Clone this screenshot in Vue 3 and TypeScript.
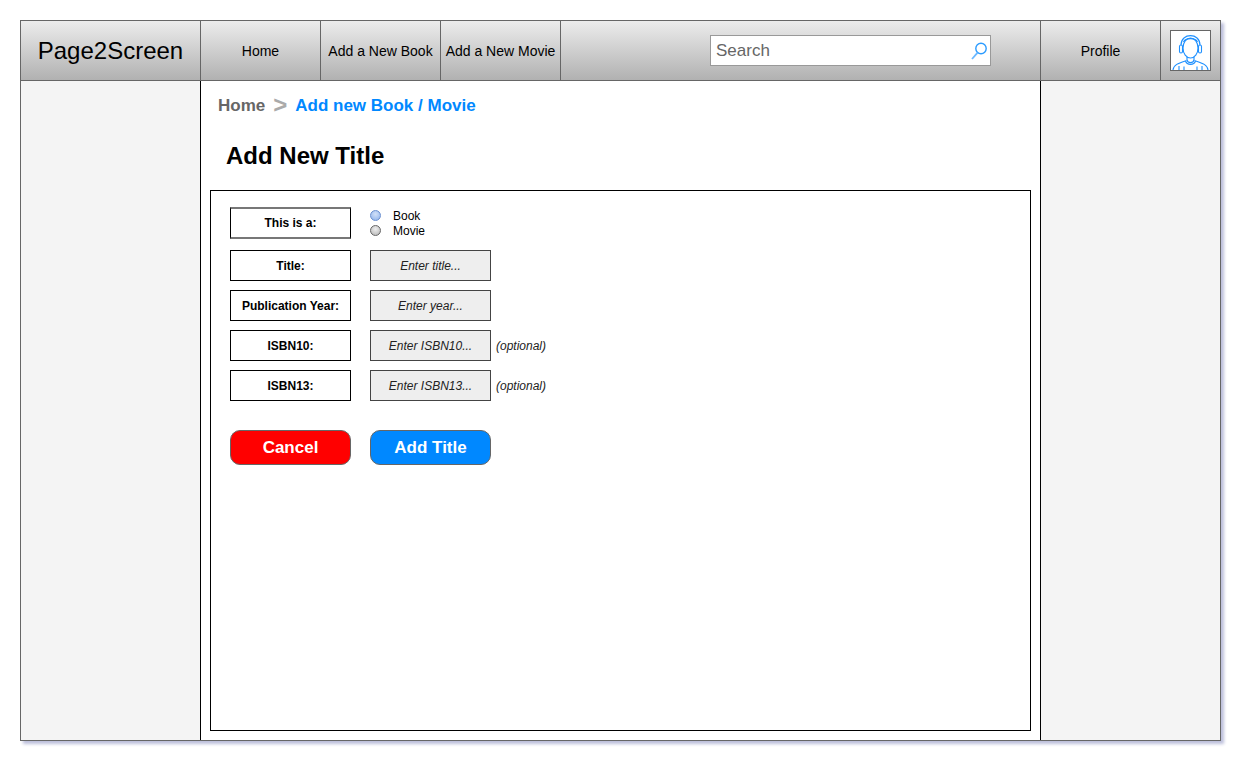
<script setup lang="ts">
interface Row { label: string; placeholder: string; optional: boolean }
const navItems: string[] = ['Home', 'Add a New Book', 'Add a New Movie']
const rows: Row[] = [
  { label: 'Title:', placeholder: 'Enter title...', optional: false },
  { label: 'Publication Year:', placeholder: 'Enter year...', optional: false },
  { label: 'ISBN10:', placeholder: 'Enter ISBN10...', optional: true },
  { label: 'ISBN13:', placeholder: 'Enter ISBN13...', optional: true },
]
</script>

<template>
  <div class="page">
    <div class="frame">
      <header class="top">
        <div class="brand">Page2Screen</div>
        <div v-for="item in navItems" :key="item" class="nav">{{ item }}</div>
        <div class="search-area">
          <div class="search">
            <span class="search-text">Search</span>
            <svg class="glass" width="18" height="20" viewBox="0 0 18 20" fill="none" stroke="#2b9bff">
              <circle cx="11" cy="7.5" r="5.2" stroke-width="1.4" />
              <path d="M7.6 11.6 L2 18" stroke-width="1.8" stroke="#6bb8ff" />
            </svg>
          </div>
        </div>
        <div class="profile">Profile</div>
        <div class="avatar-cell">
          <div class="avatar">
            <svg width="39" height="39" viewBox="0 0 39 39" fill="none" stroke="#1e90ff" stroke-width="1.1">
              <ellipse cx="19.5" cy="17" rx="7.5" ry="10" />
              <path d="M10 14 C10 1.5 29 1.5 29 14" />
              <path d="M12.5 11 C14.5 6.5 24.5 6.5 26.5 11" />
              <rect x="8.5" y="14" width="3" height="8" rx="1.5" />
              <rect x="27.5" y="14" width="3" height="8" rx="1.5" />
              <path d="M16 26 V29 M23 26 V29" />
              <path d="M16 29 C17 32.5 22 32.5 23 29" />
              <path d="M14.5 30 C16 34.5 23 34.5 24.5 30" />
              <path d="M2 39 C2.5 33.5 8 32 15.5 29.5 M37 39 C36.500 33.500 31 32 23.500 29.500" />
              <path d="M8 35 V39 M31 35 V39 M13 35.500 V39 M26 35.500 V39" />
            </svg>
          </div>
        </div>
      </header>

      <div class="body">
        <aside class="side"></aside>
        <main class="main">
          <nav class="crumbs">
            <span class="crumb-home">Home</span>
            <span class="crumb-sep">&gt;</span>
            <span class="crumb-current">Add new Book / Movie</span>
          </nav>
          <h1 class="title">Add New Title</h1>
          <section class="panel">
            <div class="type-row">
              <div class="label type-label">This is a:</div>
              <div class="radios">
                <div class="radio-line"><span class="dot dot-on"></span><span>Book</span></div>
                <div class="radio-line"><span class="dot dot-off"></span><span>Movie</span></div>
              </div>
            </div>
            <div v-for="row in rows" :key="row.label" class="row">
              <div class="label">{{ row.label }}</div>
              <div class="input">{{ row.placeholder }}</div>
              <span v-if="row.optional" class="optional">(optional)</span>
            </div>
            <div class="actions">
              <button class="btn cancel" type="button">Cancel</button>
              <button class="btn add" type="button">Add Title</button>
            </div>
          </section>
        </main>
        <aside class="side"></aside>
      </div>
    </div>
  </div>
</template>

<style>
html, body { margin: 0; background: #fff; }
</style>

<style scoped>
.page {
  width: 1247px;
  height: 767px;
  padding: 20px 0 0 20px;
  box-sizing: border-box;
  font-family: "Liberation Sans", Arial, sans-serif;
  color: #000;
  overflow: hidden;
}
.frame {
  width: 1201px;
  height: 721px;
  box-sizing: border-box;
  border: 1px solid #666;
  box-shadow: 3px 3px 3px #bcbfdb;
  display: flex;
  flex-direction: column;
  background: #f4f4f4;
}
.top {
  height: 60px;
  flex: none;
  display: flex;
  box-sizing: border-box;
  border-bottom: 1px solid #666;
  background: linear-gradient(#ececec, #b1b1b1);
}
.brand {
  width: 180px;
  box-sizing: border-box;
  flex: none;
  border-right: 1px solid #666;
  display: flex;
  align-items: center;
  justify-content: center;
  font-size: 24px;
}
.nav, .profile {
  width: 120px;
  flex: none;
  box-sizing: border-box;
  border-right: 1px solid #666;
  display: flex;
  align-items: center;
  justify-content: center;
  font-size: 14px;
  white-space: nowrap;
}
.search-area {
  width: 480px;
  flex: none;
  box-sizing: border-box;
  border-right: 1px solid #666;
  padding: 14px 0 0 149px;
}
.search {
  width: 281px;
  height: 31px;
  box-sizing: border-box;
  border: 1px solid #999;
  background: #fff;
  display: flex;
  align-items: center;
  justify-content: space-between;
  padding: 0 2px 0 5px;
}
.search-text {
  font-size: 17px;
  color: #666;
}
.glass { flex: none; }
.avatar-cell {
  flex: 1;
  padding: 9px 0 0 9px;
  box-sizing: border-box;
}
.avatar {
  width: 41px;
  height: 41px;
  box-sizing: border-box;
  border: 1px solid #666;
  background: #fff;
  overflow: hidden;
}
.avatar svg { display: block; }
.body {
  flex: 1;
  display: flex;
  min-height: 0;
}
.side { flex: 1; background: #f4f4f4; }
.main {
  width: 841px;
  flex: none;
  box-sizing: border-box;
  border-left: 1px solid #000;
  border-right: 1px solid #000;
  background: #fff;
  padding: 0 9px 9px;
  display: flex;
  flex-direction: column;
}
.crumbs {
  height: 49px;
  flex: none;
  display: flex;
  align-items: center;
  gap: 8px;
  padding-left: 8px;
  font-size: 17px;
  font-weight: bold;
}
.crumb-home { color: #666; }
.crumb-sep { color: #aaa; font-size: 24px; line-height: 1; margin-top: -1px; }
.crumb-current { color: #0088ff; }
.title {
  margin: 0;
  height: 60px;
  flex: none;
  padding-left: 16px;
  box-sizing: border-box;
  font-size: 24px;
  line-height: 52px;
  font-weight: bold;
}
.panel {
  flex: 1;
  box-sizing: border-box;
  border: 1px solid #000;
  background: #fff;
  padding: 16px 19px 0;
}
.type-row, .row {
  display: flex;
  align-items: center;
  gap: 19px;
}
.type-row { height: 32px; margin-bottom: 11px; }
.row { height: 31px; margin-bottom: 9px; }
.label {
  width: 121px;
  height: 31px;
  box-sizing: border-box;
  border: 1px solid #000;
  display: flex;
  align-items: center;
  justify-content: center;
  font-size: 12px;
  font-weight: bold;
  flex: none;
  white-space: nowrap;
}
.type-label {
  height: 32px;
  border-top: 2px solid #777;
  border-bottom: 2px solid #777;
}
.radios {
  display: flex;
  flex-direction: column;
  font-size: 12px;
}
.radio-line {
  display: flex;
  align-items: center;
  gap: 12px;
  height: 15px;
}
.dot {
  width: 11px;
  height: 11px;
  box-sizing: border-box;
  border-radius: 50%;
  border: 1px solid #666;
  flex: none;
}
.dot-on { background: radial-gradient(circle at 50% 35%, #d2e1f8, #8cb0ea); border-color: #6a8fcf; }
.dot-off { background: radial-gradient(circle at 50% 35%, #eee, #b3b3b3); }
.input {
  width: 121px;
  height: 31px;
  box-sizing: border-box;
  border: 1px solid #444;
  background: #eee;
  display: flex;
  align-items: center;
  justify-content: center;
  font-size: 12px;
  font-style: italic;
  color: #222;
  flex: none;
  white-space: nowrap;
}
.optional {
  font-size: 12px;
  font-style: italic;
  margin-left: -14px;
  color: #222;
}
.actions {
  display: flex;
  gap: 19px;
  margin-top: 29px;
}
.btn {
  width: 121px;
  height: 35px;
  box-sizing: border-box;
  border: 1px solid #666;
  border-radius: 10px;
  color: #fff;
  font-family: "Liberation Sans", Arial, sans-serif;
  font-size: 17px;
  font-weight: bold;
  padding: 0;
}
.cancel { background: #ff0000; }
.add { background: #0088ff; }
</style>
